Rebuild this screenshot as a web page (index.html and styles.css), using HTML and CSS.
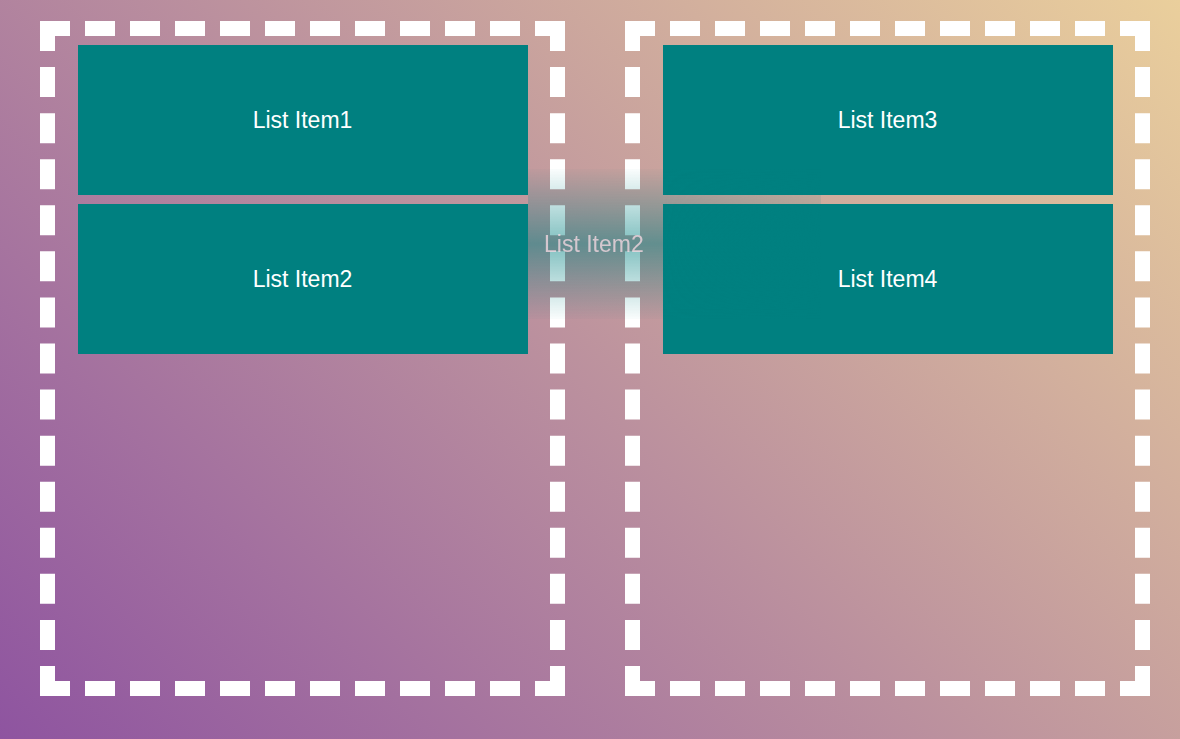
FILE: index.html
```html
<!DOCTYPE html>
<html lang="en">
<head>
  <meta charset="UTF-8" />
  <meta name="viewport" content="width=device-width, initial-scale=1.0" />
  <title>Drag and Drop Lists</title>
  <link rel="stylesheet" href="styles.css">
</head>
<body>
  <div class="board">
    <div class="list">
      <div class="item">List Item1</div>
      <div class="item">List Item2</div>
    </div>
    <div class="list">
      <div class="item">List Item3</div>
      <div class="item">List Item4</div>
    </div>
  </div>

  <!-- drag image following the cursor -->
  <div class="ghost"><span>List Item2</span></div>
</body>
</html>
```

FILE: styles.css
```css
html, body {
  margin: 0;
  padding: 0;
  height: 100vh;
  overflow: hidden;
  font-family: "Liberation Sans", Arial, sans-serif;
  background: linear-gradient(45deg, #8e54a0, #eacf9c);
}

.board {
  display: flex;
  gap: 60px;
  padding: 21px 30px 0 40px;
}

.list {
  box-sizing: border-box;
  width: 525px;
  height: 675px;
  border: 15px dashed #fff;
}

.item {
  width: 450px;
  height: 150px;
  margin: 9px auto 0;
  background: #008080;
  color: #fff;
  font-size: 23px;
  display: flex;
  align-items: center;
  justify-content: center;
}

.ghost {
  position: absolute;
  left: 528px;
  top: 169px;
  width: 293px;
  height: 150px;
  display: flex;
  align-items: center;
  padding-left: 16px;
  box-sizing: border-box;
  font-size: 23px;
  color: rgba(255, 222, 232, 0.72);
  background: linear-gradient(to bottom, rgba(0, 128, 128, 0.02), rgba(0, 128, 128, 0.5) 50%, rgba(0, 128, 128, 0.02));
  -webkit-mask-image: linear-gradient(to right, #000 45%, rgba(0, 0, 0, 0.45));
  mask-image: linear-gradient(to right, #000 45%, rgba(0, 0, 0, 0.45));
  pointer-events: none;
}
```
